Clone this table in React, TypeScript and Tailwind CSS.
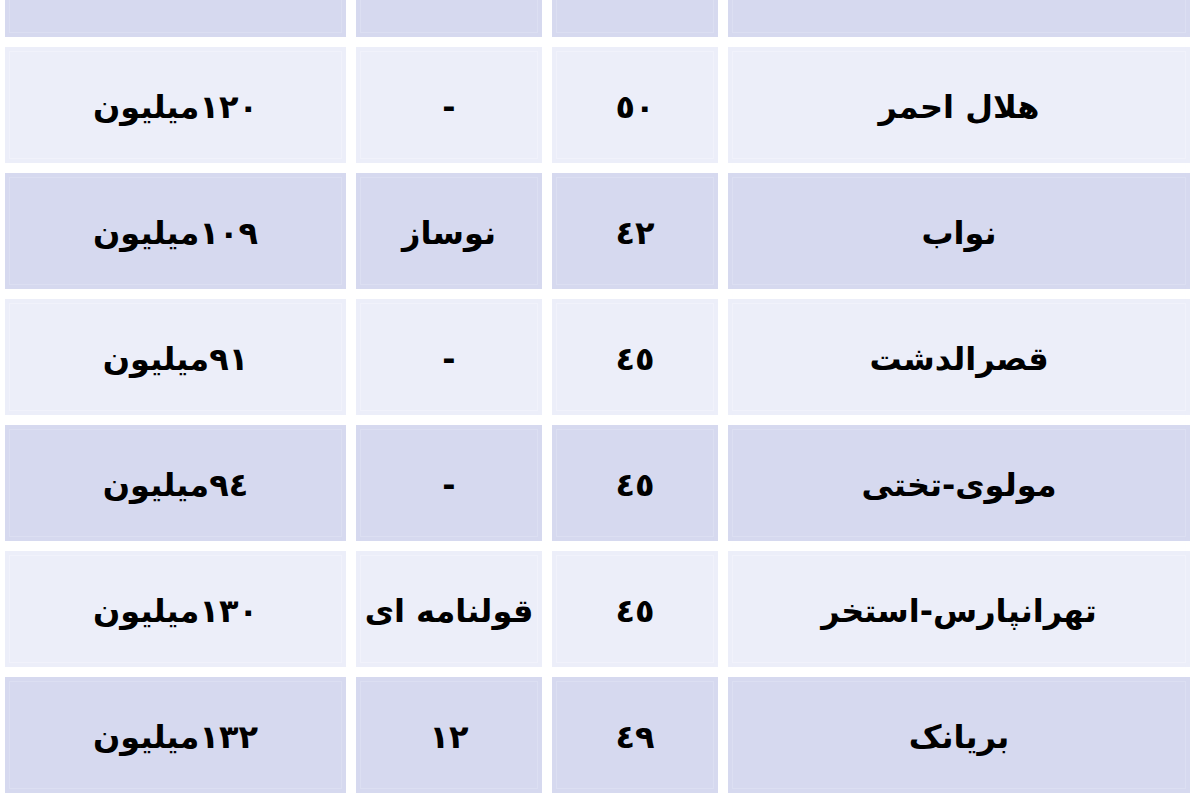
import React from "react";

const rows: string[][] = [
  ["هلال احمر", "٥٠", "-", "١٢٠میلیون"],
  ["نواب", "٤٢", "نوساز", "١٠٩میلیون"],
  ["قصرالدشت", "٤٥", "-", "٩١میلیون"],
  ["مولوی-تختی", "٤٥", "-", "٩٤میلیون"],
  ["تهرانپارس-استخر", "٤٥", "قولنامه ای", "١٣٠میلیون"],
  ["بریانک", "٤٩", "١٢", "١٣٢میلیون"],
];

function Cell({ text, dark }: { text: string; dark: boolean }) {
  return (
    <div
      className={`flex h-[116px] items-center justify-center p-[4px] ${
        dark ? "bg-[#d6d9ef]" : "bg-[#eceef9]"
      }`}
    >
      <div
        className={`flex h-full w-full items-center justify-center border ${
          dark ? "border-[#dcdff2]" : "border-[#f1f2fb]"
        }`}
      >
        <span
          className="pt-[4px] text-[32px] font-bold leading-none text-black"
          style={{ fontFamily: '"DejaVu Sans", sans-serif' }}
        >
          {text}
        </span>
      </div>
    </div>
  );
}

export default function App() {
  return (
    <div className="h-[800px] w-[1200px] overflow-hidden bg-white">
      <div
        dir="rtl"
        className="-mt-[79px] grid grid-cols-[462px_166px_186px_341px] gap-x-[10px] gap-y-[10px] pl-[5px] pr-[10px]"
        style={{ fontFamily: '"DejaVu Sans", sans-serif' }}
      >
        {[0, 1, 2, 3].map((i) => (
          <Cell key={"h" + i} text="" dark />
        ))}
        {rows.map((r, ri) =>
          r.map((c, ci) => <Cell key={ri + "-" + ci} text={c} dark={ri % 2 === 1} />)
        )}
      </div>
    </div>
  );
}
